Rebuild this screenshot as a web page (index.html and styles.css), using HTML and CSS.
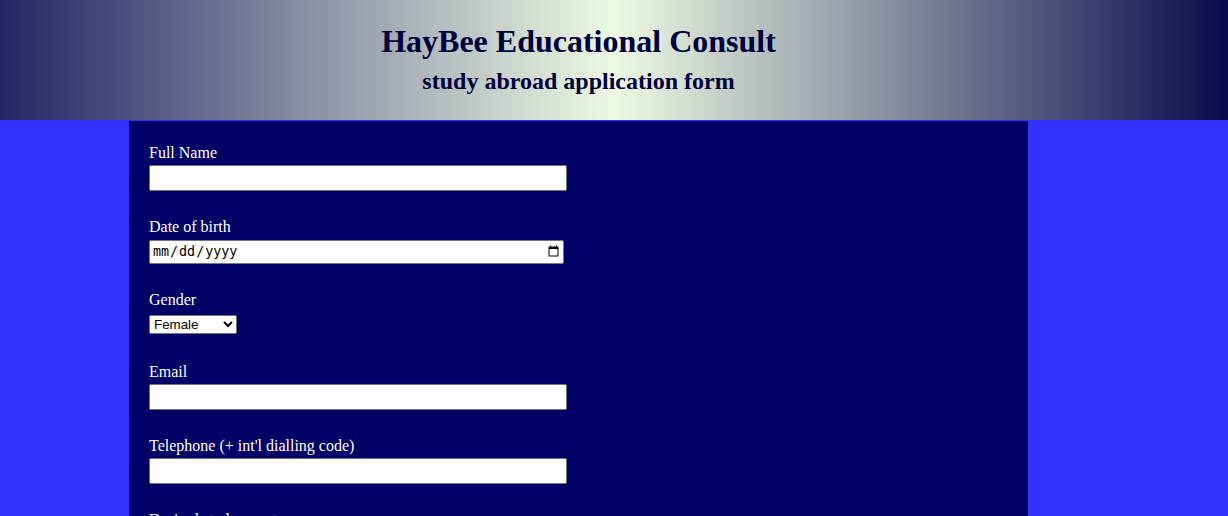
FILE: index.html
```html
<!DOCTYPE html>
<html lang="en">
<head>
<meta charset="utf-8">
<title>HayBee Educational Consult</title>
<link rel="stylesheet" href="styles.css">
</head>
<body>
<header class="banner">
  <div class="banner-inner">
    <h1 class="title">HayBee Educational Consult</h1>
    <h2 class="subtitle">study abroad application form</h2>
  </div>
</header>
<main class="panel">
  <form class="form">
    <div class="field f1">
      <label for="name">Full Name</label>
      <input class="text-input" type="text" id="name">
    </div>
    <div class="field f2">
      <label for="dob">Date of birth</label>
      <input class="date-input" type="date" id="dob">
    </div>
    <div class="field f3">
      <label for="gender">Gender</label>
      <select class="select-input" id="gender">
        <option>Female</option>
        <option>Male</option>
      </select>
    </div>
    <div class="field f4">
      <label for="email">Email</label>
      <input class="text-input" type="email" id="email">
    </div>
    <div class="field f5">
      <label for="tel">Telephone (+ int'l dialling code)</label>
      <input class="text-input" type="tel" id="tel">
    </div>
    <div class="field f6">
      <label for="country">Desired study country</label>
      <input class="text-input" type="text" id="country">
    </div>
  </form>
</main>
</body>
</html>
```
FILE: styles.css
```css
html, body {
  margin: 0;
  padding: 0;
}
body {
  background: #3333ff;
  font-family: "Liberation Serif", "Times New Roman", serif;
  font-size: 16px;
}
.banner {
  height: 120px;
  background: linear-gradient(to right, #252566 0%, #eef9e2 50%, #0b0b4e 100%);
  border-bottom: 1px solid #3333ff;
  overflow: hidden;
}
.banner-inner {
  width: 899px;
  margin-left: 129px;
  text-align: center;
  color: #00003f;
}
.title {
  margin: 23px 0 0;
  font-size: 32px;
  line-height: 37px;
  font-weight: bold;
}
.subtitle {
  margin: 7px 0 0;
  font-size: 24px;
  line-height: 28px;
  font-weight: bold;
}
.panel {
  width: 899px;
  margin-left: 129px;
  background: #000066;
  min-height: 600px;
  box-sizing: border-box;
  padding: 23px 20px 20px;
}
.form {
  display: flex;
  flex-direction: column;
}
.field {
  display: flex;
  flex-direction: column;
  align-items: flex-start;
  color: #ffffff;
}
.field label {
  line-height: 18px;
}
.text-input {
  width: 418px;
  height: 26px;
  box-sizing: border-box;
  margin: 3px 0 0;
}
.date-input {
  width: 415px;
  height: 24px;
  box-sizing: border-box;
  margin: 4px 0 0;
}
.select-input {
  width: 88px;
  height: 19px;
  box-sizing: border-box;
  margin: 6px 0 0;
}
.f1 { margin-bottom: 27px; }
.f2 { margin-bottom: 27px; }
.f3 { margin-bottom: 29px; }
.f4 { margin-bottom: 27px; }
.f5 { margin-bottom: 27px; }
```
